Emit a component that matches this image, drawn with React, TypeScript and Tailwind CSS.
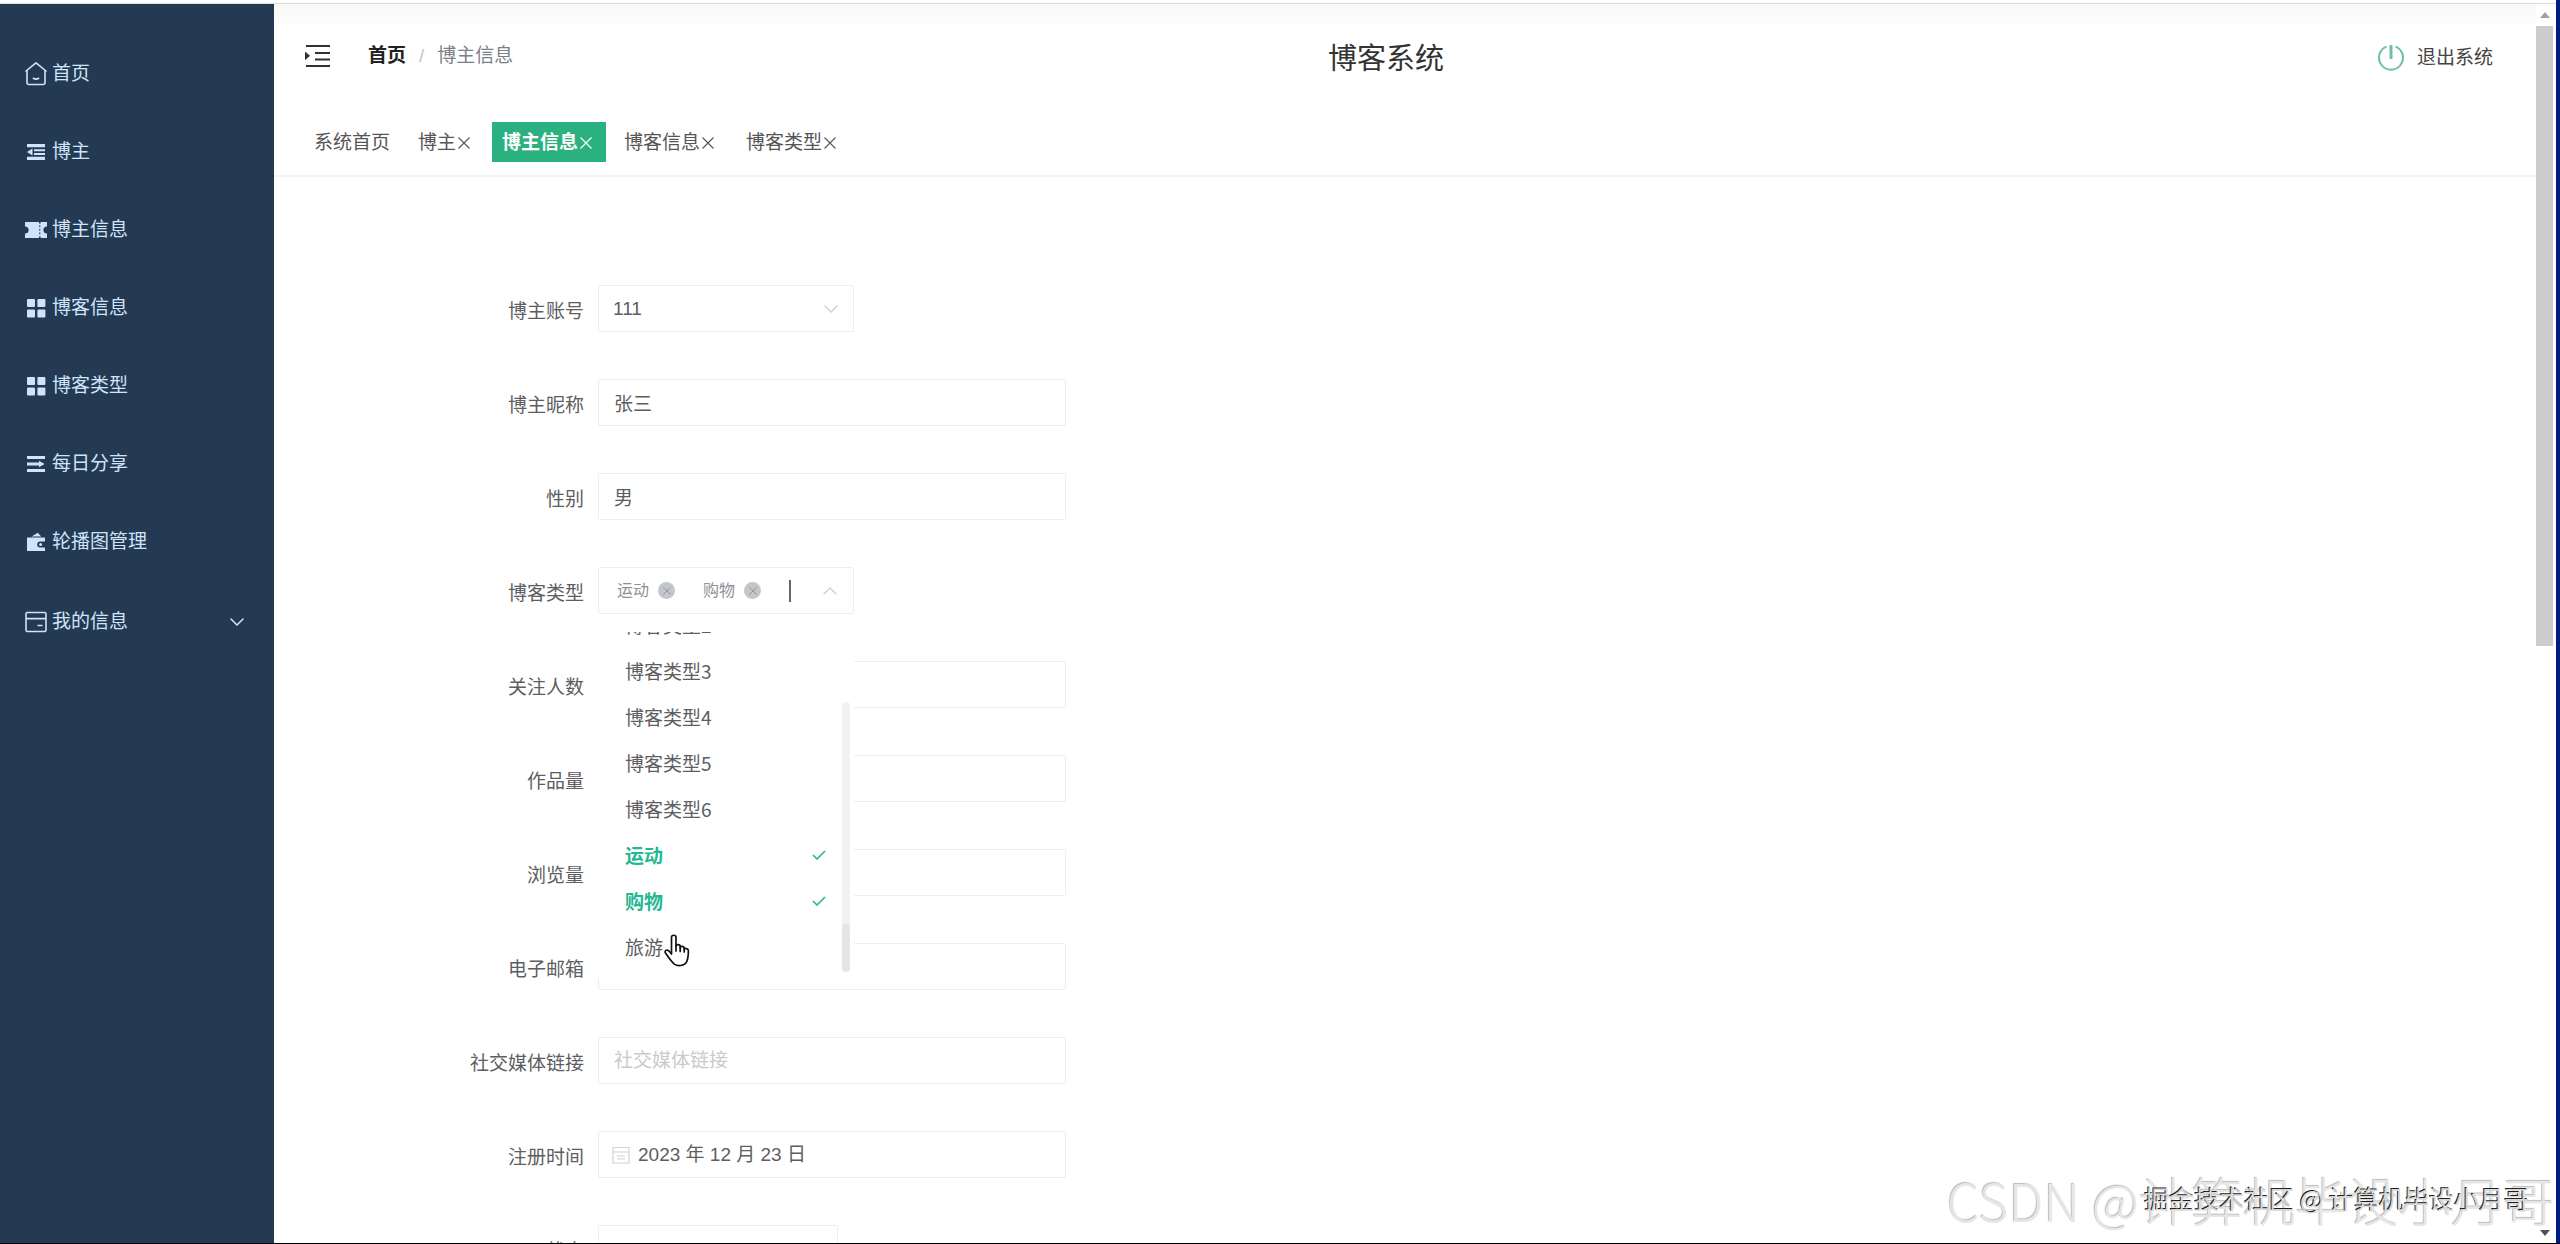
import React from "react";

interface IconProps {
  className?: string;
}

const HomeIcon: React.FC<IconProps> = ({ className }) => (
  <svg viewBox="0 0 22 24" className={className} fill="none" stroke="currentColor" strokeWidth="1.6" strokeLinecap="round" strokeLinejoin="round">
    <path d="M1 9 11 .9 21 9M2 8.500v12a2 2 0 0 0 2 2h14a2 2 0 0 0 2-2v-12" />
    <path d="M8.3 16.300c1.6 1 3.8 1 5.4 0" />
  </svg>
);

const FoldIcon: React.FC<IconProps> = ({ className }) => (
  <svg viewBox="0 0 22 22" className={className} fill="currentColor">
    <path d="M2 3h18v3.2H2zM9 8.2h11v2H9zM9 12h11v2H9zM2 15.8h18V19H2zM2 11l5.5-3.6v7.2z" />
  </svg>
);

const TicketIcon: React.FC<IconProps> = ({ className }) => (
  <svg viewBox="0 0 22 22" className={className} fill="currentColor">
    <path d="M0 3h14v1.6h1.6V3H22v4.4a3.6 3.6 0 0 0 0 7.2V19h-6.4v-1.6H14V19H0v-4.4a3.6 3.6 0 0 0 0-7.2z" />
    <path d="M14.8 6.2v9.6" stroke="#243a52" strokeWidth="1" strokeDasharray="2 1.6" />
  </svg>
);

const GridIcon: React.FC<IconProps> = ({ className }) => (
  <svg viewBox="0 0 22 22" className={className} fill="currentColor">
    <rect x="2" y="2" width="8" height="8" rx="1" />
    <rect x="12.4" y="2" width="8" height="8" rx="1" />
    <rect x="2" y="12.4" width="8" height="8" rx="1" />
    <rect x="12.4" y="12.4" width="8" height="8" rx="1" />
  </svg>
);

const OperationIcon: React.FC<IconProps> = ({ className }) => (
  <svg viewBox="0 0 22 22" className={className} fill="currentColor">
    <path d="M2 3h18v3H2zM2 9.4h12V7.8l5.6 3.2-5.6 3.2v-1.6H2zM2 16h18v3H2z" />
  </svg>
);

const WalletIcon: React.FC<IconProps> = ({ className }) => (
  <svg viewBox="0 0 22 22" className={className} fill="currentColor">
    <path d="m6.5 5.6 6.3-3.8 3.4 3.8zM2 6.4h18v4.2h-4.8a3 3 0 0 0 0 6H20V20H2z" />
    <circle cx="15.6" cy="13.6" r="1.5" />
  </svg>
);

const CardIcon: React.FC<IconProps> = ({ className }) => (
  <svg viewBox="0 0 22 22" className={className} fill="none" stroke="currentColor" strokeWidth="1.6">
    <rect x="1" y="1.5" width="20" height="19" rx="1.5" />
    <path d="M1 7.6h20M12.5 14.5h5" />
  </svg>
);

const UnfoldIcon: React.FC<IconProps> = ({ className }) => (
  <svg viewBox="0 0 26 22" className={className} fill="currentColor">
    <path d="M1 0h24v2H1zM10 7h15v2H10zM10 13.4h15v2H10zM1 20h24v2H1zM0 6.4l5 4.4-5 4.4z" />
  </svg>
);

const PowerIcon: React.FC<IconProps> = ({ className }) => (
  <svg viewBox="0 0 28 28" className={className} fill="none" stroke="currentColor">
    <path d="M9.4 2.6a12 12 0 1 0 9.2 0" strokeWidth="2" />
    <path d="M14 1v14" strokeWidth="3" />
  </svg>
);

const ChevronIcon: React.FC<IconProps> = ({ className }) => (
  <svg viewBox="0 0 14 8" className={className} fill="none" stroke="currentColor" strokeWidth="1.5" strokeLinecap="round">
    <path d="m1 1 6 6 6-6" />
  </svg>
);

const CloseIcon: React.FC<IconProps> = ({ className }) => (
  <svg viewBox="0 0 12 12" className={className} fill="none" stroke="currentColor" strokeWidth="1.1">
    <path d="m.5.5 11 11m0-11-11 11" />
  </svg>
);

const CheckIcon: React.FC<IconProps> = ({ className }) => (
  <svg viewBox="0 0 14 10" className={className} fill="none" stroke="currentColor" strokeWidth="1.6">
    <path d="m1 5 4 4 8-8" />
  </svg>
);

const CalendarIcon: React.FC<IconProps> = ({ className }) => (
  <svg viewBox="0 0 18 18" className={className} fill="none" stroke="currentColor" strokeWidth="1.2">
    <path d="M1 1.500h16v15.500H1zM1 6h16M5 10h8M5 13h8" />
  </svg>
);

const HandIcon: React.FC<IconProps> = ({ className }) => (
  <svg viewBox="0 0 26 33" className={className} fill="#fff" stroke="#111" strokeWidth="1.700" strokeLinejoin="round" strokeLinecap="round">
    <path d="M7.500 20V3.500C7.500.5 12 .5 12 3.500v9c0-2.600 4.200-2.300 4.200 0v1.200c.4-2 4-1.700 4 .6v1.200c.6-1.700 4.200-1.200 4.200 1.300 0 7-.3 9.500-2.700 12.400-2 2.500-8 3.200-11 1.200C8 28.500 4.600 23.400 1.500 19c-1.300-2.200 1.300-4 3.300-2.200z" />
    <path d="M12 12.500V17M16.200 13v4.500M20.200 14.500V18" fill="none" />
  </svg>
);

const menuItems = [
  { label: "首页", icon: HomeIcon },
  { label: "博主", icon: FoldIcon },
  { label: "博主信息", icon: TicketIcon },
  { label: "博客信息", icon: GridIcon },
  { label: "博客类型", icon: GridIcon },
  { label: "每日分享", icon: OperationIcon },
  { label: "轮播图管理", icon: WalletIcon },
];

const tabs = [
  { label: "系统首页", closable: false },
  { label: "博主", closable: true },
  { label: "博主信息", closable: true },
  { label: "博客信息", closable: true },
  { label: "博客类型", closable: true },
];

const typeOptions = ["博客类型2", "博客类型3", "博客类型4", "博客类型5", "博客类型6", "运动", "购物", "旅游"];
const selectedTypes = ["运动", "购物"];

const Sidebar = () => (
  <aside className="w-[274px] shrink-0 bg-[#243a52] pt-[31px] text-[#cfe4fa]">
    <nav>
      {menuItems.map(({ label, icon: Icon }) => (
        <a key={label} href="#" className="flex h-[78px] items-center gap-[5px] pl-[25px]">
          <Icon className="h-6 w-[22px]" />
          <span>{label}</span>
        </a>
      ))}
      <button type="button" className="mt-0.5 flex h-[78px] w-full items-center gap-[5px] pr-[30px] pl-[25px]">
        <CardIcon className="h-6 w-[22px]" />
        <span>我的信息</span>
        <ChevronIcon className="ml-auto h-2 w-3.5" />
      </button>
    </nav>
  </aside>
);

const Header = () => (
  <header className="grid h-[108px] shrink-0 grid-cols-[1fr_auto_1fr] items-center bg-linear-to-b from-[#f8f8f6] to-white to-25% pr-[43px] pl-[31px]">
    <div className="flex items-center pb-1">
      <button type="button" aria-label="收起菜单">
        <UnfoldIcon className="h-[22px] w-[26px] text-[#303133]" />
      </button>
      <nav className="ml-[37px] flex items-center gap-[13px]">
        <a href="#" className="font-bold text-[#222]">首页</a>
        <span className="text-[#c0c4cc]">/</span>
        <span className="text-[#7c7f85]">博主信息</span>
      </nav>
    </div>
    <h1 className="mt-0.5 mr-[26px] text-[29px] text-[#333]">博客系统</h1>
    <button type="button" className="flex items-center gap-3 justify-self-end text-[#444]">
      <PowerIcon className="size-7 text-[#6fc0a2]" />
      退出系统
    </button>
  </header>
);

const TabBar = () => (
  <div className="flex shrink-0 gap-2 border-b-2 border-[#f4f4f4] pt-[10px] pb-[13px] pl-[30px]">
    {tabs.map((tab) => (
      <div
        key={tab.label}
        className={`flex h-10 items-center gap-0.5 px-[10px] pt-0.5 ${
          tab.label === "博主信息" ? "bg-[#2bb17f] font-bold text-white" : "text-[#555]"
        }`}
      >
        <a href="#">{tab.label}</a>
        {tab.closable && (
          <button type="button" aria-label={`关闭${tab.label}`} className="mr-1">
            <CloseIcon className="size-3" />
          </button>
        )}
      </div>
    ))}
  </div>
);

const boxClass = "h-[47px] rounded-xs border border-[#eeeeee] bg-white";

interface RowProps {
  id: string;
  label: string;
  children: React.ReactNode;
}

const Row: React.FC<RowProps> = ({ id, label, children }) => (
  <div className="flex h-[47px] items-center gap-3.5">
    <label htmlFor={id} className="w-[290px] pt-1.5 text-right">
      {label}
    </label>
    {children}
  </div>
);

interface TextRowProps {
  id: string;
  label: string;
  value?: string;
  placeholder?: string;
}

const TextRow: React.FC<TextRowProps> = ({ id, label, value, placeholder }) => (
  <Row id={id} label={label}>
    <input
      id={id}
      type="text"
      defaultValue={value}
      placeholder={placeholder}
      className={`${boxClass} w-[468px] px-[15px] placeholder:text-[#c8cacd]`}
    />
  </Row>
);

const TypeSelect = () => (
  <div className={`${boxClass} relative flex w-[256px] items-center pl-[18px]`}>
    {selectedTypes.map((type) => (
      <span key={type} className="mr-7 flex items-center gap-[9px] text-base text-[#8e9196]">
        {type}
        <button type="button" aria-label={`移除${type}`} className="flex size-[17px] items-center justify-center rounded-full bg-[#c3c6ca]">
          <CloseIcon className="size-2 text-[#7f8287]" />
        </button>
      </span>
    ))}
    <span className="h-[22px] w-0.5 bg-[#666]" />
    <input id="type" type="text" className="w-0 outline-none" />
    <ChevronIcon className="mr-4 ml-auto h-2 w-3.5 rotate-180 text-[#d0d2d5]" />

    <div className="absolute top-[47px] -left-px z-10 w-[256px] bg-white pt-[17px] pb-[6px]">
      <div className="h-[340px] overflow-hidden">
        <ul className="-mt-[30px] font-['Noto_Sans_CJK_SC',sans-serif]">
          {typeOptions.map((type) => {
            const selected = selectedTypes.includes(type);
            return (
              <li
                key={type}
                className={`flex h-[46px] items-center justify-between pr-7 pl-[27px] ${
                  selected ? "font-bold text-[#22b892]" : ""
                }`}
              >
                {type}
                {selected && <CheckIcon className="h-2.5 w-3.5" />}
              </li>
            );
          })}
        </ul>
      </div>
      <div className="absolute right-1 bottom-[6px] flex h-[270px] w-2 items-end rounded-full bg-[#f0f1f2]">
        <div className="h-12 w-2 rounded-full bg-[#e3e5e6]" />
      </div>
      <HandIcon className="absolute bottom-[11px] left-[66px] h-[33px] w-[26px]" />
    </div>
  </div>
);

const BloggerForm = () => (
  <form className="flex min-h-0 flex-1 flex-col gap-[47px] overflow-hidden pt-[108px] pl-5 text-[#5c5e62]">
    <Row id="account" label="博主账号">
      <div className="relative">
        <select id="account" defaultValue="111" className={`${boxClass} w-[256px] appearance-none px-[14px]`}>
          <option>111</option>
        </select>
        <ChevronIcon className="pointer-events-none absolute top-5 right-4 h-2 w-3.5 text-[#d0d2d5]" />
      </div>
    </Row>
    <TextRow id="nickname" label="博主昵称" value="张三" />
    <TextRow id="gender" label="性别" value="男" />
    <Row id="type" label="博客类型">
      <TypeSelect />
    </Row>
    <TextRow id="followers" label="关注人数" />
    <TextRow id="works" label="作品量" />
    <TextRow id="views" label="浏览量" />
    <TextRow id="email" label="电子邮箱" />
    <TextRow id="social" label="社交媒体链接" placeholder="社交媒体链接" />
    <Row id="registered" label="注册时间">
      <div className={`${boxClass} flex w-[468px] items-center gap-2 pl-[13px]`}>
        <CalendarIcon className="size-[18px] text-[#d0d2d5]" />
        <input id="registered" type="text" defaultValue="2023 年 12 月 23 日" className="flex-1 outline-none" />
      </div>
    </Row>
    <Row id="status" label="状态">
      <select id="status" className={`${boxClass} w-[240px] appearance-none`} />
    </Row>
  </form>
);

const ScrollTrack = () => (
  <div className="flex w-[17px] shrink-0 flex-col items-center">
    <svg viewBox="0 0 10 6" className="my-2 h-[6px] w-2.5 shrink-0 fill-[#a0a0a0]">
      <path d="M0 6 5 0l5 6z" />
    </svg>
    <div className="h-1/2 w-full bg-[#cdcdcd]" />
    <svg viewBox="0 0 10 6" className="mt-auto mb-[7px] h-[6px] w-2.5 shrink-0 fill-[#505050]">
      <path d="m0 0 5 6 5-6z" />
    </svg>
  </div>
);

export default function App() {
  return (
    <div className="relative flex h-screen flex-col overflow-hidden border-b border-black bg-white font-['Liberation_Sans','Noto_Sans_CJK_SC',sans-serif] text-[19px] leading-7">
      <div className="h-1 shrink-0 border-b border-[#dcdcdc]" />
      <div className="flex min-h-0 flex-1 pr-[7px]">
        <Sidebar />
        <main className="flex min-w-0 flex-1 flex-col">
          <Header />
          <TabBar />
          <BloggerForm />
        </main>
        <ScrollTrack />
      </div>
      <div className="absolute inset-y-0 right-0 w-1 bg-[#001c80]" />

      <p className="pointer-events-none absolute right-[5px] bottom-[17px] font-['Noto_Sans_CJK_SC',sans-serif] text-[52px] leading-[52px] font-light text-[#e6e6e6] [text-shadow:-1px_-1px_1px_#bdbdbd]">
        CSDN @计算机毕设小月哥
      </p>
      <p className="pointer-events-none absolute right-[31px] bottom-[31px] font-['Noto_Sans_CJK_SC',sans-serif] text-[25px] text-[#d8d8d8] [text-shadow:-1px_-1px_0_#222]">
        掘金技术社区 @ 计算机毕设小月哥
      </p>
    </div>
  );
}
